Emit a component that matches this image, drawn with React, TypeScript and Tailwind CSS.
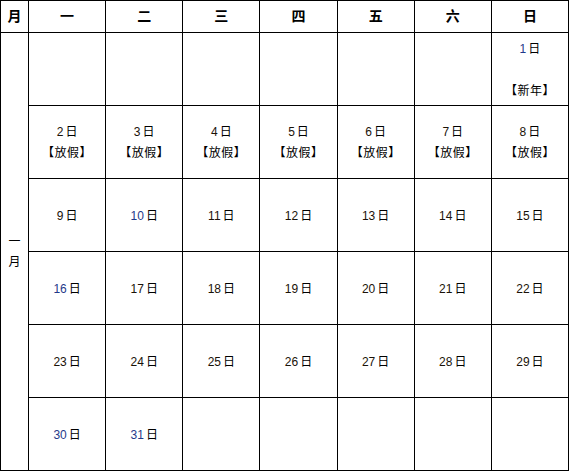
const FONT = "font-['Liberation_Sans','Noto_Sans_CJK_SC',sans-serif]";

const heads = ["一", "二", "三", "四", "五", "六", "日"];

// 1月 - 第一行只有周日
type Day = { d: number; note?: string; gap?: boolean } | null;

const blueDays = new Set([1, 10, 16, 30, 31]);

const days: Day[] = [
  null, null, null, null, null, null, { d: 1, note: "【新年】", gap: true },
  ...[2, 3, 4, 5, 6, 7, 8].map((d) => ({ d, note: "【放假】" })),
  ...Array.from({ length: 21 }, (_, i) => ({ d: i + 9 })),
  { d: 30 }, { d: 31 }, null, null, null, null, null,
];

function DayCell({ day }: { day: Day }) {
  return (
    <div className="border-r border-b border-black flex flex-col items-center justify-center pt-[2px] text-[12px] leading-[21px] text-black">
      {day && (
        <>
          <div>
            <span className={blueDays.has(day.d) ? "text-[#1f3a8a]" : "text-[#1a1208]"}>{day.d}</span>
            <span className="ml-[2px]">日</span>
          </div>
          {day.gap && <div className="h-[21px]" />}
          {day.note && <div className="tracking-[0.5px]">{day.note}</div>}
        </>
      )}
    </div>
  );
}

export default function App() {
  return (
    <div className={`w-[569px] h-[471px] bg-white ${FONT}`}>
      <div className="grid grid-cols-[28px_repeat(7,1fr)] grid-rows-[32px_repeat(6,73px)] border-l border-t border-black">
        <div className="border-r border-b border-black flex items-center justify-center font-bold text-[14px]">
          月
        </div>
        {heads.map((h) => (
          <div key={h} className="border-r border-b border-black flex items-center justify-center font-bold text-[14px]">
            {h}
          </div>
        ))}
        <div className="row-span-6 border-r border-b border-black flex flex-col items-center justify-center text-[12px] leading-[20px]">
          <div>一</div>
          <div>月</div>
        </div>
        {days.map((day, i) => (
          <DayCell key={i} day={day} />
        ))}
      </div>
    </div>
  );
}
